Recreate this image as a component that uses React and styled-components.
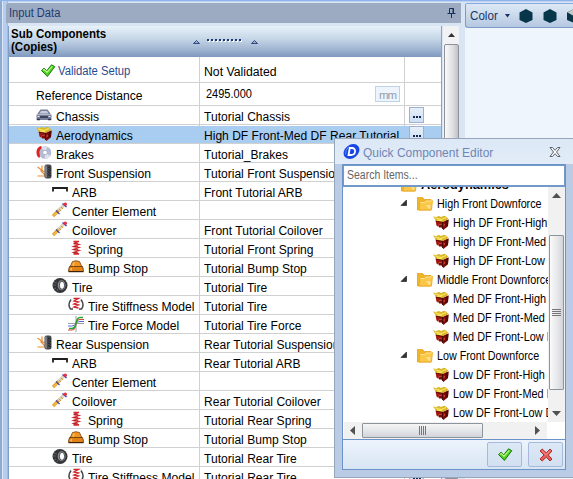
import React from "react";
import styled, { createGlobalStyle } from "styled-components";

const Global = createGlobalStyle`
  * { box-sizing: border-box; }
  body { margin: 0; overflow: hidden; background: #dbe6f4; }
`;

const Window = styled.div`
  position: relative;
  display: flex;
  width: 573px;
  height: 479px;
  overflow: hidden;
  background: #d9e5f3;
  border-top: 1px solid #8fb3ea;
  box-shadow: inset 0 1px #bcd3f3;
  font: 12.5px "Liberation Sans", Arial, sans-serif;
  color: #000;
`;
const Edge = styled.div`
  flex: none;
  width: 8px;
  background: linear-gradient(90deg, #8faad0 0 2px, #dce8f7 2px 3px, #b5cdee 3px 7px, #a4bbdc 7px);
`;
const Panel = styled.section`
  flex: none;
  width: 453px;
  display: flex;
  flex-direction: column;
  padding-top: 2px;
`;
const PanelTitle = styled.header`
  flex: none;
  height: 20px;
  margin-left: -2px;
  padding: 0 5px 0 3px;
  display: flex;
  align-items: center;
  justify-content: space-between;
  border-radius: 3px 0 0 0;
  background: #9cabc2;
  color: #1f3a70;
`;
const Text = styled.span`
  display: inline-block;
  flex: none;
  white-space: pre;
  transform: scaleX(${(p) => p.$sx || 1});
  transform-origin: left center;
  font-size: ${(p) => p.$size || 12.5}px;
  font-weight: ${(p) => (p.$bold ? 700 : 400)};
  color: ${(p) => p.$color || "inherit"};
`;
const PanelBody = styled.div`
  flex: 1;
  display: flex;
  min-height: 0;
  padding-top: 3px;
`;
const Grid = styled.div`
  flex: none;
  width: 434px;
  background: #fff;
  border-left: 1px solid #7f9dc6;
  border-right: 1px solid #8da3c2;
  overflow: hidden;
`;
const GridHeader = styled.div`
  height: 31px;
  display: grid;
  grid-template-columns: 181px 1fr;
  padding: 2px 0 0 2px;
  background: linear-gradient(#e8f1f9, #c9d9e9 38%, #a6bad5 70%, #7f9abf);
  line-height: 13px;
`;
const HeaderLines = styled.div`
  display: flex;
  flex-direction: column;
  align-items: flex-start;
`;
const SortSlot = styled.div`
  padding-top: 9px;
`;
const Row = styled.div`
  display: grid;
  grid-template-columns: 191px 205px 1fr;
  height: ${(p) => p.$h || 19}px;
  border-bottom: 1px solid #d0d0d0;
  background: ${(p) => (p.$selected ? "linear-gradient(#fff 0 1px, #a8cdf1 1px)" : "#fff")};
`;
const NameCell = styled.div`
  display: flex;
  align-items: center;
  gap: ${(p) => p.$gap ?? 4}px;
  padding-left: ${(p) => p.$indent}px;
  padding-top: ${(p) => p.$drop || 0}px;
  border-right: 1px solid ${(p) => (p.$selected ? "#a8cdf1" : "#d0d0d0")};
  overflow: hidden;
`;
const NameText = styled.span`
  padding-top: 3px;
`;
const ValueCell = styled.div`
  display: flex;
  align-items: center;
  justify-content: space-between;
  padding: ${(p) => p.$drop ?? 3}px 4px 0 ${(p) => p.$left || 4}px;
  border-right: 1px solid ${(p) => (p.$selected ? "#a8cdf1" : "#d0d0d0")};
  overflow: hidden;
`;
const ActionCell = styled.div`
  padding: 1px 0 0 4px;
`;
const MoreButton = styled.button`
  display: flex;
  align-items: flex-end;
  justify-content: center;
  gap: 1px;
  width: 15px;
  height: 16px;
  padding: 0 0 4px;
  border: 1px solid #9fb0d0;
  background: linear-gradient(#e6effa, #cfdff2);
  &::before, &::after, & > i { content: ""; width: 2px; height: 2px; background: #13294f; }
`;
const Unit = styled.span`
  display: flex;
  align-items: center;
  justify-content: center;
  width: 25px;
  height: 16px;
  padding-top: 2px;
  border: 1px solid #bed3e8;
  background: #edf4fc;
  color: #929fad;
  font-size: 11.5px;
  letter-spacing: -1px;
`;
const MainScroll = styled.div`
  width: 16px;
  margin-left: 1px;
  display: flex;
  flex-direction: column;
  align-items: center;
  background: #f1f2f3;
  padding-top: 6px;
  gap: 7px;
`;
const MainThumb = styled.div`
  width: 15px;
  flex: 1;
  border: 1px solid #8e9197;
  border-radius: 2px;
  background: linear-gradient(90deg, #fafafa, #dedfe1 60%, #bfc1c5);
`;
const Viewer = styled.div`
  flex: 1;
  min-width: 0;
  margin: 2px 0 0 4px;
  background: #eff5fd;
`;
const Tools = styled.div`
  height: 25px;
  display: flex;
  align-items: center;
  padding-left: 4px;
  border: 1px solid #7d9bc8;
  border-top-color: #86aae0;
  border-right: 0;
  border-radius: 2px 0 0 3px;
  background: linear-gradient(#dde8f5, #c6d6ea 60%, #b5c8e1);
  color: #1c3566;
  overflow: hidden;
`;
const ToolLabel = styled.span`
  flex: none;
  width: 35px;
`;
const HexSlot = styled.span`
  margin-left: 8px;
`;
const Dialog = styled.div`
  position: absolute;
  left: 334px;
  top: 137px;
  width: 240px;
  height: 340px;
  border: 1px solid #98a6bb;
  border-right: 0;
  background: #bacce5;
`;
const DialogTitle = styled.div`
  height: 25px;
  display: flex;
  align-items: center;
  padding-left: 8px;
  gap: 3px;
  background: linear-gradient(#dce8f6, #e2ecf8);
`;
const TitleSlot = styled.div`
  width: 141px;
  padding-top: 2px;
`;
const CloseSlot = styled.span`
  display: flex;
  margin-left: 42px;
`;
const DialogBody = styled.div`
  width: 224px;
  height: 306px;
  margin-left: 7px;
  border: 1px solid #6b92c9;
  display: flex;
  flex-direction: column;
  background: #fff;
`;
const Search = styled.div`
  height: 22px;
  flex: none;
  display: flex;
  align-items: center;
  padding: 0 0 1px 3px;
  border: 1px solid #7399c9;
  border-width: 1px 1px 2px;
  color: #666;
`;
const TreeArea = styled.div`
  display: flex;
  height: 235px;
  padding-left: 1px;
`;
const Tree = styled.div`
  width: 204px;
  overflow: hidden;
`;
const TreeRow = styled.div`
  display: flex;
  align-items: center;
  height: 19px;
  gap: 4px;
  padding-left: ${(p) => p.$pad}px;
  &:first-child { margin-top: -12px; }
`;
const Twist = styled.span`
  flex: none;
  width: 13px;
  height: 10px;
  display: flex;
`;
const VScroll = styled.div`
  width: 17px;
  display: flex;
  flex-direction: column;
  align-items: center;
  justify-content: space-between;
  padding: 6px 0;
  background: #f1f1f2;
`;
const VThumb = styled.div`
  width: 15px;
  height: 155px;
  margin-top: 16px;
  border: 1px solid #8c949d;
  border-radius: 1px;
  display: flex;
  align-items: center;
  justify-content: center;
  background: linear-gradient(90deg, #fafafa, #e5e6e9 60%, #d2d4d9);
`;
const HScroll = styled.div`
  width: 203px;
  height: 17px;
  margin-left: 1px;
  display: flex;
  align-items: center;
  padding: 0 6px;
  background: #f1f1f2;
`;
const HThumb = styled.div`
  width: 121px;
  height: 15px;
  margin: 0 52px 0 7px;
  display: flex;
  align-items: center;
  justify-content: center;
  border: 1px solid #8c949d;
  border-radius: 1px;
  background: linear-gradient(#f6f6f6, #e5e6e9 50%, #d2d4d9);
`;
const Actions = styled.div`
  flex: 1;
  display: flex;
  justify-content: flex-end;
  align-items: center;
  gap: 6px;
  padding-right: 2px;
  border-top: 1px solid #6b92c9;
  background: linear-gradient(#edf4fc, #d8e5f4);
`;
const ActionButton = styled.button`
  width: 35px;
  height: 25px;
  padding: 0;
  display: flex;
  align-items: center;
  justify-content: center;
  border: 1px solid #a6b9d8;
  border-radius: 2px;
  background: linear-gradient(#dce8f5, #d2e0f1);
`;
const Svg = styled.svg`
  display: block;
  flex: none;
`;

const Pic = ({ w = 16, h = 16, children }) => (
  <Svg width={w} height={h} viewBox={`0 0 ${w} ${h}`}>{children}</Svg>
);

const Check = () => (
  <Pic>
    <path d="M1.500 7.500 4 5.200l2.800 2.600L11.500 1.800l3.300 1.900L7.400 13.500Z" fill="#4bcb20" stroke="#17800e" strokeLinejoin="round" />
    <path d="M3 7.200 4.200 6.500 7 9.300 12.300 3.400" fill="none" stroke="#b9f584" strokeWidth="1.300" />
  </Pic>
);
const Cross = () => (
  <Pic>
    <path d="m4.200 2 4 3.800L12 2l2 2-3.700 4L14 12l-2 2-3.800-3.800L4.200 14 2 12l4-4-4-4Z" fill="#e2605b" stroke="#b52b2b" strokeLinejoin="round" />
    <path d="m4 3.700 4 4L12 3.500" fill="none" stroke="#f39c95" />
  </Pic>
);
const Car = () => (
  <Pic>
    <path d="M4.500 2.500h7L14 6l1.500 2v5H.5V8L2 6Z" fill="#787f99" />
    <path d="M5 4h6l1.500 2.500h-9Z" fill="#c9cedc" />
    <path d="M1 7.500h14" stroke="#b7bccc" />
    <path d="M4 10h8" stroke="#40465c" strokeWidth="2" />
    <path d="M1.500 9.500h2m9 0h2" stroke="#e2e5ee" />
    <path d="M1 12.500h3m8 0h3" stroke="#353a4b" strokeWidth="1.500" />
  </Pic>
);
const Aero = () => (
  <Pic>
    <path d="M2.500 5.500 10 6.500V10L6 9.500 5.500 12 3.500 10.500Z" fill="#a4160f" />
    <path d="M9 7 15.500 4.500 15 11 10.500 15 8.500 12.500 6 12.500V9.500L9 10Z" fill="#7c0e0a" />
    <path d="M12.500 6 15.500 4.500 15 11 12.500 13Z" fill="#5a0806" />
    <path d="M0 1.500 3 2l3-1L8 2l3-1.200L13 1.500 15.500 4 9.500 7 3 6 1.500 3.500Z" fill="#d9b62c" />
    <path d="m2 2.700 6 1.800 5-2M4 5l5 .8" fill="none" stroke="#f9e55d" strokeWidth="1.200" />
    <path d="m3 6.200 6.500 1.100V14" fill="none" stroke="#3d0806" strokeWidth=".8" />
    <path d="m10.500 9.500 1.500-1v2l-1.500 1" fill="#d23a2a" />
  </Pic>
);
const Brake = () => (
  <Pic>
    <circle cx="9" cy="7.500" r="6.300" fill="#b4bcd4" />
    <path d="M9 7.500 5.500 2.500a7 7 0 0 1 6-.6Zm0 0 5.500 3.500A7 7 0 0 1 9 13.800Z" fill="#dce1ed" />
    <circle cx="9" cy="7.500" r="2.300" fill="#fff" stroke="#aab2c8" />
    <path d="M5.500 1C2 1.300.5 4.500.5 7.500.600 10.500 1.500 12 3.500 13L4 10.500C3 8 3.200 5 5.500 3Z" fill="#e2201c" />
  </Pic>
);
const Suspension = () => (
  <Pic>
    <path d="m1.500 3 7 5M6 1.500V7M1.500 12h7.500M4.500 6.500 9 11" fill="none" stroke="#ee8f2c" strokeWidth="1.200" />
    <rect x="8.500" y=".5" width="7" height="14" rx="2" fill="#45484e" />
    <path d="M10 1.500v12" stroke="#8c9097" strokeWidth="1.500" />
    <path d="m12 3 3 1.500m-3 1 3 1.500m-3 1 3 1.500m-3 1 3 1.500" stroke="#202124" />
  </Pic>
);
const Arb = () => (
  <Pic>
    <path d="M1 8.500V5h14v3.500" fill="none" stroke="#1f1f1f" strokeWidth="1.800" />
  </Pic>
);
const Shock = () => (
  <Pic>
    <path d="M1 14 7 8" stroke="#e8a62a" strokeWidth="3.200" />
    <path d="m6.500 8.500 5-5" stroke="#ddd4b8" strokeWidth="3.200" />
    <path d="m10.500 1.500 4 3.500" stroke="#3342c6" strokeWidth="1.500" />
    <path d="m2 13.500 3-3" stroke="#fbd165" />
    <path d="m4 8.500 3.500 3.500" stroke="#4b48a4" strokeWidth="1.200" />
    <path d="m7 7 2 2m0-4 2 2" stroke="#d49a3a" />
    <circle cx="13.300" cy="2.200" r="1.700" fill="#e03343" />
  </Pic>
);
const Spring = () => (
  <Pic>
    <path d="M5.500 1.500H11M5.500 3.500 11 4.500 5.500 6.500 11 7.500 5.500 9.500 11 10.500 5.500 12.500 11 14H5.500M5.500 3.500 11 1.500" fill="none" stroke="#d4272b" strokeWidth="1.300" />
    <path d="M6 3.500h4m-4 3h4m-4 3h4m-4 3h4" stroke="#8d1b20" strokeWidth=".6" />
  </Pic>
);
const Bump = () => (
  <Pic>
    <path d="M4.500 2.500q3.500-1.500 7 0L14 8H2Z" fill="#ee9522" stroke="#784313" strokeWidth=".8" />
    <path d="M1.500 7.500h13q1 2.500 1 5.300H.5Q.5 10 1.500 7.500Z" fill="#e08216" stroke="#5f340e" strokeWidth=".8" />
    <path d="M6 3.500 5 7m-1.500 2L3 11.500" stroke="#ffbe4d" strokeWidth="1.500" />
    <path d="M1 12.500h14" stroke="#3a220d" />
  </Pic>
);
const Tire = () => (
  <Pic>
    <ellipse cx="8" cy="7.500" rx="7.500" ry="7.500" fill="#333538" />
    <path d="m2 4 3 1M1 7h3m-2 4 2-1m1 3 1-2" stroke="#686b6f" strokeWidth=".8" />
    <ellipse cx="9.600" cy="7.200" rx="3.900" ry="5" fill="#8e9195" />
    <ellipse cx="10" cy="7.300" rx="2.600" ry="4" fill="#fff" stroke="#2e3033" strokeWidth=".8" />
  </Pic>
);
const Stiffness = () => (
  <Pic>
    <path d="M3 2.500Q-.8 8 2.500 12h2.500M13 2.500q3.800 5.500.5 9.500H11" fill="none" stroke="#44484c" strokeWidth="1.500" />
    <path d="M5.500 1.500h5L6 4l4.500 1L6 7l4.500 1L6 10l4.500 1" fill="none" stroke="#d02429" strokeWidth="1.300" />
  </Pic>
);
const Force = () => (
  <Pic>
    <path d="M8 0v16M0 7.500h16" stroke="#888" strokeWidth=".8" />
    <path d="M0 10h3.500Q7 10 8 7.500q1-2 4-2h4" fill="none" stroke="#5564df" />
    <path d="M0 14h4Q7 14 8 8q1-4.500 4-4.500h4" fill="none" stroke="#db4540" strokeWidth="1.200" />
    <path d="M1 12.500h3q3 0 4-5.500t4-5.500h3" fill="none" stroke="#2ba62f" strokeWidth="1.500" />
  </Pic>
);
const Folder = () => (
  <Pic>
    <path d="M.5 1.500h5L7.500 3.500H14V14H.5Z" fill="#f1b52a" stroke="#e2a11c" strokeWidth=".8" />
    <path d="m2 14 1-8H7l1.500-1.500h7L14.500 14Z" fill="#fbc748" stroke="#e9a925" strokeWidth=".8" />
    <path d="M3.500 6.500h4L9 5h5.800" fill="none" stroke="#ffe79b" />
    <path d="M9 9h4.500v3.500L12 13Z" fill="#ffe08a" />
  </Pic>
);
const Logo = () => (
  <Pic w={17} h={17}>
    <ellipse cx="8.500" cy="8.500" rx="8.600" ry="6.600" transform="rotate(-38 8.500 8.500)" fill="#1846e4" />
    <path d="m6.800 5-1.300 7h2.500c5 0 5.500-7 1-7Z" fill="none" stroke="#fff" strokeWidth="1.800" />
    <path d="M2.500 11.500Q2 7 6 3.500" fill="none" stroke="#7aa0ff" strokeWidth=".8" />
  </Pic>
);
const Close = () => (
  <Pic w={12} h={12}>
    <path d="M1 1.500h2.500L6 4.300l2.500-2.800H11L7.500 6l3.500 4.500H8.500L6 7.700l-2.500 2.800H1L4.500 6Z" fill="#fff" stroke="#59606b" />
  </Pic>
);
const Pin = () => (
  <Pic w={9} h={12}>
    <path d="M2.500 1.500h4v5h-4ZM.500 6.500h8M4.500 7v4" fill="none" stroke="#18305f" />
    <path d="M6 1v5" stroke="#18305f" />
  </Pic>
);
const arrowPaths = { up: "M0 5 4.500 0 9 5Z", down: "M0 0h9L4.500 5Z", left: "M5 0v9L0 4.500Z", right: "M0 0l5 4.500L0 9Z" };
const Arrow = ({ dir = "up", color = "#515151" }) => {
  const side = dir === "left" || dir === "right";
  return <Pic w={side ? 5 : 9} h={side ? 9 : 5}><path d={arrowPaths[dir]} fill={color} /></Pic>;
};
const SmallArrow = () => (
  <Pic w={9} h={5}><path d="M1 5 4.500 1 8 5Z" fill="#333" /></Pic>
);
const SortMarks = () => (
  <Pic w={68} h={8}>
    <path d="M1.500 6.500 4.500 3.500 7.500 6.500Zm58 0L62.500 3.500 65.500 6.500Z" fill="#9cadd0" stroke="#233e77" strokeWidth=".9" />
    <path d="M16 4h35" stroke="#fff" strokeWidth="2" strokeDasharray="2 2" />
    <path d="M15 3h35" stroke="#1d3770" strokeWidth="2" strokeDasharray="2 2" />
  </Pic>
);
const Hexagons = () => (
  <Pic w={66} h={16}>
    <path d="m8 1 6.500 3.500v7.500L8 15 1.500 12V4.500Zm24 0 6.500 3.500v7.500L32 15l-6.500-3V4.500Z" fill="#07364b" />
    <path d="m56 1 7 3.500v7.500l-7 3-7-3V4.500Z" fill="#07364b" />
    <path d="m49.500 4.500 6.500-3.500v7Z" fill="#c7c7c7" />
  </Pic>
);

const items = [
  [Car, 0, "Chassis", "Tutorial Chassis"],
  [Aero, 0, "Aerodynamics", "High DF Front-Med DF Rear Tutorial"],
  [Brake, 0, "Brakes", "Tutorial_Brakes"],
  [Suspension, 0, "Front Suspension", "Tutorial Front Suspension"],
  [Arb, 1, "ARB", "Front Tutorial ARB"],
  [Shock, 1, "Center Element", ""],
  [Shock, 1, "Coilover", "Front Tutorial Coilover"],
  [Spring, 2, "Spring", "Tutorial Front Spring"],
  [Bump, 2, "Bump Stop", "Tutorial Bump Stop"],
  [Tire, 1, "Tire", "Tutorial Tire"],
  [Stiffness, 2, "Tire Stiffness Model", "Tutorial Tire"],
  [Force, 2, "Tire Force Model", "Tutorial Tire Force"],
  [Suspension, 0, "Rear Suspension", "Rear Tutorial Suspension"],
  [Arb, 1, "ARB", "Rear Tutorial ARB"],
  [Shock, 1, "Center Element", ""],
  [Shock, 1, "Coilover", "Rear Tutorial Coilover"],
  [Spring, 2, "Spring", "Tutorial Rear Spring"],
  [Bump, 2, "Bump Stop", "Tutorial Bump Stop"],
  [Tire, 1, "Tire", "Tutorial Rear Tire"],
  [Stiffness, 2, "Tire Stiffness Model", "Tutorial Rear Tire"],
];
const groups = [
  ["High Front Downforce", ["High DF Front-High", "High DF Front-Med", "High DF Front-Low"]],
  ["Middle Front Downforce", ["Med DF Front-High", "Med DF Front-Med DF", "Med DF Front-Low DF"]],
  ["Low Front Downforce", ["Low DF Front-High", "Low DF Front-Med DF", "Low DF Front-Low DF"]],
];

const SubComponents = () => (
  <Grid>
    <GridHeader>
      <HeaderLines>
        <Text $bold $sx={0.92}>Sub Components</Text>
        <Text $bold $sx={0.92}>(Copies)</Text>
      </HeaderLines>
      <SortSlot><SortMarks /></SortSlot>
    </GridHeader>
    <Row $h={26}>
      <NameCell $indent={31} $drop={2} $gap={2}><Check /><Text $color="#1f4c91" $sx={0.9}>Validate Setup</Text></NameCell>
      <ValueCell $drop={5}><Text $sx={0.98}>Not Validated</Text></ValueCell>
      <ActionCell />
    </Row>
    <Row $h={23}>
      <NameCell $indent={27} $drop={4}><Text $sx={0.97}>Reference Distance</Text></NameCell>
      <ValueCell $drop={0} $left={6}><Text $sx={0.88}>2495.000</Text><Unit>mm</Unit></ValueCell>
      <ActionCell />
    </Row>
    {items.map(([Icon, level, name, value], i) => (
      <Row key={i} $selected={i === 1}>
        <NameCell $indent={27 + level * 16} $selected={i === 1}>
          <Icon /><NameText><Text $sx={0.97}>{name}</Text></NameText>
        </NameCell>
        <ValueCell $selected={i === 1}><Text $sx={0.965}>{value}</Text></ValueCell>
        <ActionCell><MoreButton><i /></MoreButton></ActionCell>
      </Row>
    ))}
  </Grid>
);

const Editor = () => (
  <Dialog>
    <DialogTitle>
      <Logo />
      <TitleSlot><Text $size={13} $sx={0.92} $color="#7085b4">Quick Component Editor</Text></TitleSlot>
      <CloseSlot><Close /></CloseSlot>
    </DialogTitle>
    <DialogBody>
      <Search><Text $sx={0.84}>Search Items...</Text></Search>
      <TreeArea>
        <Tree>
          <TreeRow $pad={57}><Folder /><Text $bold $sx={1.02}>Aerodynamics</Text></TreeRow>
          {groups.map(([group, children]) => (
            <React.Fragment key={group}>
              <TreeRow $pad={56}>
                <Twist><Pic w={8} h={8}><path d="M6.500 1v5.500H1Z" fill="#333" stroke="#111" strokeWidth=".6" /></Pic></Twist>
                <Folder /><Text $sx={0.86}>{group}</Text>
              </TreeRow>
              {children.map((c) => (
                <TreeRow key={c} $pad={89}><Aero /><Text $sx={0.87}>{c}</Text></TreeRow>
              ))}
            </React.Fragment>
          ))}
        </Tree>
        <VScroll>
          <Arrow />
          <VThumb><Pic w={9} h={8}><path d="M0 .5h9M0 2.500h9M0 4.500h9M0 6.500h9" stroke="#777" /></Pic></VThumb>
          <Arrow dir="down" />
        </VScroll>
      </TreeArea>
      <HScroll>
        <Arrow dir="left" />
        <HThumb><Pic w={8} h={9}><path d="M.5 0v9M2.500 0v9M4.500 0v9M6.500 0v9" stroke="#777" /></Pic></HThumb>
        <Arrow dir="right" />
      </HScroll>
      <Actions>
        <ActionButton><Check /></ActionButton>
        <ActionButton><Cross /></ActionButton>
      </Actions>
    </DialogBody>
  </Dialog>
);

export default function App() {
  return (
    <>
      <Global />
      <Window>
        <Edge />
        <Panel>
          <PanelTitle><Text $sx={0.89}>Input Data</Text><Pin /></PanelTitle>
          <PanelBody>
            <SubComponents />
            <MainScroll><SmallArrow /><MainThumb /></MainScroll>
          </PanelBody>
        </Panel>
        <Viewer>
          <Tools>
            <ToolLabel><Text $sx={0.93}>Color</Text></ToolLabel>
            <Pic w={5} h={4}><path d="M0 0h5L2.500 3.500Z" fill="#18305f" /></Pic>
            <HexSlot><Hexagons /></HexSlot>
          </Tools>
        </Viewer>
        <Editor />
      </Window>
    </>
  );
}
